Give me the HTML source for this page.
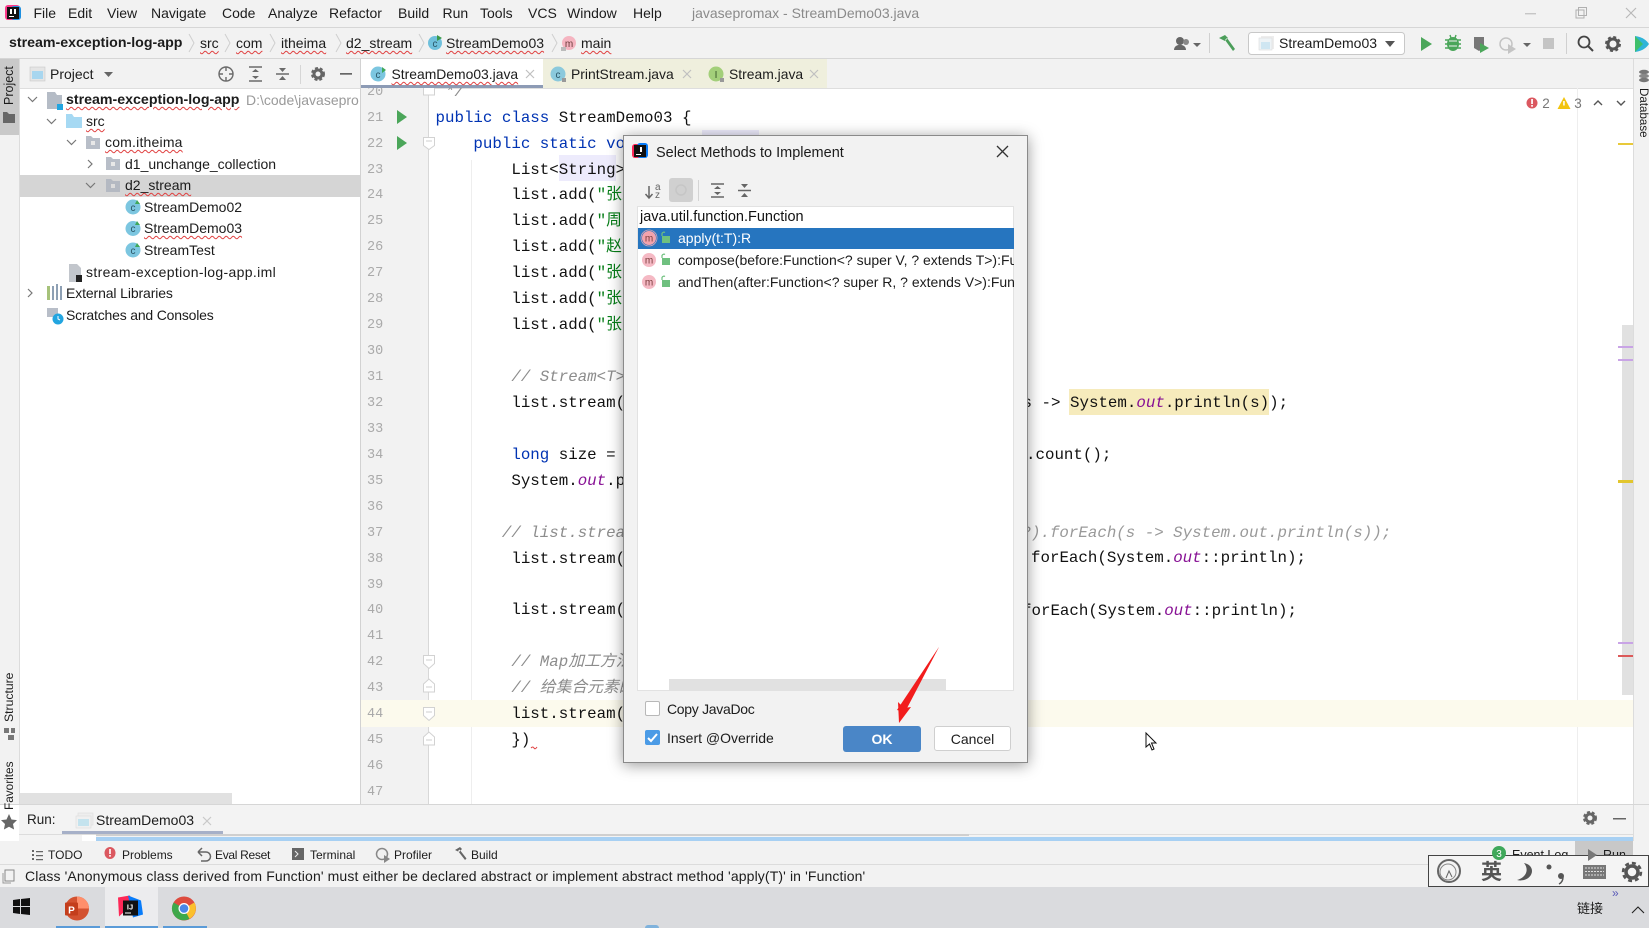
<!DOCTYPE html>
<html><head><meta charset="utf-8"><style>
html,body{margin:0;padding:0;width:1649px;height:928px;overflow:hidden;background:#fff}
#root{position:relative;width:1649px;height:928px;overflow:hidden;font-family:"Liberation Sans","Noto Sans CJK SC",sans-serif;font-size:14px;color:#1c1c1c;filter:blur(.3px)}
.b{position:absolute}
.t{position:absolute;white-space:pre;line-height:20px;height:20px}
.w{text-decoration:underline wavy #e04040 1px;text-underline-offset:2px}
svg{position:absolute;left:0;top:0}
.code{position:absolute;font-family:"Liberation Mono","DejaVu Sans Mono","Noto Sans CJK SC",monospace;font-size:15.8px;color:#111}
.code div{height:25.95px;line-height:25.95px;white-space:pre;overflow:hidden}
.k{color:#0033b3}.s{color:#067d17}.o{color:#871094;font-style:italic}.c{color:#8c8c8c;font-style:italic}
.m{position:absolute;white-space:pre;font-family:"Liberation Mono","DejaVu Sans Mono",monospace;font-size:15.8px;line-height:26px;height:26px;color:#111}
.rot{position:absolute;white-space:pre;font-size:12.5px;line-height:16px;transform-origin:0 0}
.nums{position:absolute;font-family:"Liberation Mono",monospace;font-size:13.5px;color:#aaa}
.nums div{height:25.95px;line-height:25.95px}
</style></head><body><div id="root">
<!-- chrome backgrounds -->
<div class="b" style="left:0;top:0;width:1649px;height:27px;background:#f2f2f2;border-bottom:1px solid #d6d6d6"></div>
<div class="b" style="left:0;top:28px;width:1649px;height:30px;background:#f2f2f2;border-bottom:1px solid #d6d6d6"></div>
<div class="b" style="left:0;top:59px;width:19px;height:746px;background:#f2f2f2;border-right:1px solid #dcdcdc"></div>
<div class="b" style="left:0;top:59px;width:19px;height:76px;background:#c9c9c9"></div>
<div class="b" style="left:20px;top:59px;width:341px;height:29px;background:#f2f2f2;border-bottom:1px solid #dedede"></div>
<div class="b" style="left:361px;top:59px;width:1272px;height:29px;background:#f2f2f2;border-bottom:1px solid #dedede"></div>
<div class="b" style="left:1633px;top:59px;width:16px;height:806px;background:#f2f2f2;border-left:1px solid #dcdcdc;box-sizing:border-box"></div>
<div class="b" style="left:361px;top:59px;width:182px;height:26px;background:#fff"></div>
<div class="b" style="left:361px;top:85px;width:182px;height:3px;background:#8d9bb5"></div>
<div class="b" style="left:543px;top:59px;width:284px;height:29px;background:#efefdd"></div>
<div class="b" style="left:360px;top:59px;width:1px;height:745px;background:#d2d2d2"></div>
<div class="b" style="left:20px;top:175px;width:340px;height:21.5px;background:#d5d5d5"></div>
<div class="b" style="left:361px;top:88px;width:67px;height:716px;background:#f2f2f2;border-right:1px solid #d8d8d8"></div>
<div class="b" style="left:471px;top:160px;width:1px;height:644px;background:#eeeeee"></div>
<div class="b" style="left:1577px;top:88px;width:1px;height:716px;background:#eeeeee"></div>
<div class="b" style="left:361px;top:700px;width:1272px;height:27px;background:#fcfaed"></div>
<div class="b" style="left:1622px;top:325px;width:11px;height:370px;background:#e1e1e1"></div>
<div class="b" style="left:1618px;top:143px;width:15px;height:2px;background:#e8c93a"></div>
<div class="b" style="left:1618px;top:346px;width:15px;height:2px;background:#c9a4e6"></div>
<div class="b" style="left:1618px;top:359px;width:15px;height:2px;background:#c9a4e6"></div>
<div class="b" style="left:1618px;top:480px;width:15px;height:3px;background:#e2c62e"></div>
<div class="b" style="left:1618px;top:642px;width:15px;height:2px;background:#c9a4e6"></div>
<div class="b" style="left:1618px;top:655px;width:15px;height:2px;background:#dc5a5a"></div>
<div class="b" style="left:20px;top:793px;width:212px;height:11px;background:#e1e1e1"></div>
<div class="b" style="left:0;top:804px;width:1649px;height:1px;background:#d6d6d6"></div>
<div class="b" style="left:19px;top:805px;width:1614px;height:29px;background:#f3f3f3;border-bottom:1px solid #dcdcdc"></div>
<div class="b" style="left:62px;top:831px;width:161px;height:3px;background:#a6b0c8"></div>
<div class="b" style="left:19px;top:835px;width:1614px;height:6px;background:#f3f3f3"></div>
<div class="b" style="left:82px;top:835px;width:14px;height:6px;background:#fff"></div>
<div class="b" style="left:96px;top:834px;width:873px;height:2px;background:#cfcfcf"></div>
<div class="b" style="left:96px;top:837px;width:1537px;height:4px;background:#a7d0f3"></div>
<div class="b" style="left:0;top:841px;width:1649px;height:24px;background:#f2f2f2;border-bottom:1px solid #dcdcdc;box-sizing:border-box"></div>
<div class="b" style="left:1575px;top:841px;width:58px;height:24px;background:#c8c8c8"></div>
<div class="b" style="left:0;top:865px;width:1649px;height:22px;background:#f2f2f2"></div>
<div class="b" style="left:0;top:887px;width:1649px;height:41px;background:#dadbde"></div>
<div class="b" style="left:105px;top:887px;width:53px;height:41px;background:#ececee"></div>
<div class="b" style="left:56px;top:926px;width:44px;height:2px;background:#5a9bd8"></div>
<div class="b" style="left:105px;top:926px;width:53px;height:2px;background:#5a9bd8"></div>
<div class="b" style="left:163px;top:926px;width:44px;height:2px;background:#5a9bd8"></div>
<div class="b" style="left:645px;top:925px;width:14px;height:3px;border-radius:7px 7px 0 0;background:#7fb2dc"></div>

<!-- menu -->
<div class="t" style="left:33.500px;top:2.500px">File</div><div class="t" style="left:68px;top:2.500px">Edit</div><div class="t" style="left:107px;top:2.500px">View</div><div class="t" style="left:151px;top:2.500px">Navigate</div><div class="t" style="left:222px;top:2.500px">Code</div><div class="t" style="left:268px;top:2.500px">Analyze</div><div class="t" style="left:329px;top:2.500px">Refactor</div><div class="t" style="left:398px;top:2.500px">Build</div><div class="t" style="left:442.500px;top:2.500px">Run</div><div class="t" style="left:480px;top:2.500px">Tools</div><div class="t" style="left:528px;top:2.500px">VCS</div><div class="t" style="left:567px;top:2.500px">Window</div><div class="t" style="left:633px;top:2.500px">Help</div>
<div class="t" style="left:692px;top:2.500px;color:#8a8a8a">javasepromax - StreamDemo03.java</div>

<!-- breadcrumb -->
<div class="t" style="left:9px;top:33px;font-weight:bold;font-size:14.2px">stream-exception-log-app</div>
<div class="t w" style="left:200px;top:33px">src</div><div class="t w" style="left:236px;top:33px">com</div><div class="t w" style="left:281px;top:33px">itheima</div><div class="t w" style="left:346px;top:33px">d2_stream</div><div class="t w" style="left:446px;top:33px">StreamDemo03</div><div class="t w" style="left:581px;top:33px">main</div>
<div class="t" style="left:1279px;top:33px;z-index:3">StreamDemo03</div>

<!-- project panel -->
<div class="t" style="left:50px;top:64px">Project</div>
<div class="t w" style="left:66px;top:90px;font-weight:bold;font-size:14.2px">stream-exception-log-app</div>
<div class="b" style="left:246px;top:90px;width:114px;height:20px;overflow:hidden"><div class="t" style="left:0;top:0;color:#9a9a9a">D:\code\javasepro</div></div>
<div class="t w" style="left:86px;top:111px">src</div>
<div class="t w" style="left:105px;top:132px;letter-spacing:.2px">com.itheima</div>
<div class="t" style="left:125px;top:154px">d1_unchange_collection</div>
<div class="t w" style="left:125px;top:175px">d2_stream</div>
<div class="t" style="left:144px;top:197px">StreamDemo02</div>
<div class="t w" style="left:144px;top:218px">StreamDemo03</div>
<div class="t" style="left:144px;top:240px">StreamTest</div>
<div class="t" style="left:86px;top:262px;letter-spacing:.34px">stream-exception-log-app.iml</div>
<div class="t" style="left:66px;top:283px;letter-spacing:-.12px">External Libraries</div>
<div class="t" style="left:66px;top:305px;letter-spacing:-.19px">Scratches and Consoles</div>

<!-- tabs -->
<div class="t w" style="left:391.500px;top:64px;font-size:13.9px">StreamDemo03.java</div>
<div class="t" style="left:571px;top:64px;font-size:13.9px">PrintStream.java</div>
<div class="t" style="left:729px;top:64px;font-size:13.9px">Stream.java</div>

<!-- left/right vertical labels -->
<div class="rot" style="left:1px;top:105px;transform:rotate(-90deg)">Project</div>
<div class="rot" style="left:1px;top:722px;font-size:12.2px;transform:rotate(-90deg)">Structure</div>
<div class="rot" style="left:1px;top:810px;font-size:11.8px;transform:rotate(-90deg)">Favorites</div>
<div class="rot" style="left:1651px;top:88px;font-size:11.6px;transform:rotate(90deg)">Database</div>

<!-- highlights -->
<div class="b" style="left:702px;top:130px;width:57px;height:6px;background:#edebfc"></div>
<div class="b" style="left:559px;top:155px;width:57px;height:26px;background:#edebfc"></div>
<div class="b" style="left:1069px;top:389px;width:200px;height:26px;background:#f6ebbc"></div>

<!-- line numbers -->
<div class="b" style="left:361px;top:88px;width:60px;height:716px;overflow:hidden"><div class="nums" style="left:6px;top:-8.300px">
<div>20</div><div>21</div><div>22</div><div>23</div><div>24</div><div>25</div><div>26</div><div>27</div><div>28</div><div>29</div><div>30</div><div>31</div><div>32</div><div>33</div><div>34</div><div>35</div><div>36</div><div>37</div><div>38</div><div>39</div><div>40</div><div>41</div><div>42</div><div>43</div><div>44</div><div>45</div><div>46</div><div>47</div></div></div>

<!-- code -->
<div class="b" style="left:435.500px;top:88px;width:590px;height:716px;overflow:hidden"><div class="code" style="left:0;top:-8.300px;width:590px">
<div class="c"> */</div>
<div><span class="k">public class</span> StreamDemo03 {</div>
<div>    <span class="k">public static</span> <span class="k">void</span></div>
<div>        List&lt;String&gt; list</div>
<div>        list.add(<span class="s">"张三</span></div>
<div>        list.add(<span class="s">"周</span></div>
<div>        list.add(<span class="s">"赵</span></div>
<div>        list.add(<span class="s">"张</span></div>
<div>        list.add(<span class="s">"张</span></div>
<div>        list.add(<span class="s">"张</span></div>
<div></div>
<div>        <span class="c">// Stream&lt;T&gt; filter</span></div>
<div>        list.stream()</div>
<div></div>
<div>        <span class="k">long</span> size = list</div>
<div>        System.<span class="o">out</span>.println</div>
<div></div>
<div>       <span class="c">// list.stream()</span></div>
<div>        list.stream()</div>
<div></div>
<div>        list.stream()</div>
<div></div>
<div>        <span class="c">// Map加工方法</span></div>
<div>        <span class="c">// 给集合元素的</span></div>
<div>        list.stream()</div>
<div>        })</div>
<div></div>
<div></div>
</div></div>
<div class="m" style="left:1022.500px;top:390px">s -&gt; </div>
<div class="m" style="left:1070px;top:390px">System.<span class="o">out</span>.println(s));</div>
<div class="m" style="left:1026px;top:441.500px">.count();</div>
<div class="m" style="left:1021.500px;top:519.500px;color:#999;font-style:italic">?).forEach(s -&gt; System.out.println(s));</div>
<div class="m" style="left:1031px;top:545px">forEach(System.<span class="o">out</span>::println);</div>
<div class="m" style="left:1022px;top:597.500px">forEach(System.<span class="o">out</span>::println);</div>

<!-- bottom bar text -->
<div class="t" style="left:27px;top:810px;font-size:13.5px">Run:</div>
<div class="t" style="left:96px;top:810px">StreamDemo03</div>
<div class="t" style="left:48px;top:845px;font-size:12px">TODO</div>
<div class="t" style="left:122px;top:845px;font-size:12px">Problems</div>
<div class="t" style="left:215px;top:845px;font-size:12px;letter-spacing:-.3px">Eval Reset</div>
<div class="t" style="left:310px;top:845px;font-size:12px">Terminal</div>
<div class="t" style="left:394px;top:845px;font-size:12px">Profiler</div>
<div class="t" style="left:471px;top:845px;font-size:12px">Build</div>
<div class="t" style="left:1512px;top:845px;font-size:12.5px">Event Log</div>
<div class="t" style="left:1603px;top:845px;font-size:12.5px">Run</div>
<div class="t" style="left:25px;top:865.500px;letter-spacing:.12px">Class 'Anonymous class derived from Function' must either be declared abstract or implement abstract method 'apply(T)' in 'Function'</div>
<div class="t" style="left:1577px;top:899px;font-size:13px;font-family:'Liberation Sans','Noto Sans CJK SC',sans-serif">链接</div>
<div class="t" style="left:1612px;top:883px;font-size:12px;color:#5a5ab8">»</div>

<!-- IME box -->
<div class="b" style="left:1428px;top:855px;width:221px;height:32px;background:#f4f4f4;border:1px solid #444;box-sizing:border-box"></div>
<div class="t" style="left:1481px;top:860px;font-size:21px;font-weight:bold;color:#555;line-height:22px;height:22px;font-family:'Noto Sans CJK SC',sans-serif">英</div>

<!-- base icons -->
<svg width="1649" height="928" viewBox="0 0 1649 928" style="pointer-events:none">
<!-- IJ logo -->
<rect x="5" y="5" width="15" height="15" fill="#fc3a8a" rx="3"/><rect x="11" y="6" width="10" height="14" fill="#1d8fe0" rx="3"/><rect x="7" y="7" width="12" height="12" fill="#111"/><rect x="9" y="16" width="5" height="1" fill="#fff"/><rect x="10" y="9" width="2" height="5" fill="#fff"/><rect x="14" y="9" width="2" height="5" fill="#fff"/>
<!-- breadcrumb chevrons -->
<g fill="none" stroke="#cfcfcf" stroke-width="1"><path d="M189 34l5 9-5 9M225 34l5 9-5 9M270 34l5 9-5 9M336 34l5 9-5 9M419 34l5 9-5 9M552 34l5 9-5 9"/></g>
<circle cx="435" cy="43" r="7" fill="#6fc0dc"/><text x="435" y="47" font-size="10" text-anchor="middle" fill="#2a5566" font-family="Liberation Sans">c</text><path d="M437 35l5 3-5 3z" fill="#3a9a4a"/>
<circle cx="569" cy="43" r="7" fill="#f5b4c0"/><text x="569" y="47" font-size="10" text-anchor="middle" fill="#6a3a3a" font-family="Liberation Sans">m</text><path d="M561 47h5v4h-5z" fill="#bbb"/>
<!-- right toolbar -->
<circle cx="1180" cy="41" r="4" fill="#666"/><path d="M1174 50c0-7 12-7 12 0z" fill="#666"/><circle cx="1186" cy="42" r="3" fill="#888"/><path d="M1193 43h8l-4 4z" fill="#666"/>
<rect x="1209" y="33" width="1" height="20" fill="#d0d0d0"/>
<path d="M1219 38l6-3 3 3-3 3zM1225 40l8 11 2-2-8-11z" fill="#4b9e5a"/>
<rect x="1248.5" y="32.5" width="156" height="22" rx="3" fill="#fff" stroke="#c8c8c8"/>
<rect x="1261" y="36" width="13" height="13" fill="#ededed"/><rect x="1259" y="38" width="13" height="12" fill="#eef3f6" stroke="#ddd" stroke-width=".6"/><rect x="1261" y="42" width="9" height="7" fill="#cfe6f2"/>
<path d="M1385 41h10l-5 6z" fill="#555"/>
<path d="M1421 37l11 7-11 7z" fill="#4ba65a"/>
<ellipse cx="1453" cy="44" rx="6" ry="7" fill="#4ba65a"/><path d="M1445 40h16M1445 44h16M1445 48h16M1450 35l1 3M1456 35l-1 3" stroke="#4ba65a" stroke-width="1.4"/><path d="M1449 41h8M1449 46h8" stroke="#f2f2f2" stroke-width="1"/>
<path d="M1474 37h10v11l-5 3-5-3z" fill="#777"/><path d="M1480 43l9 5-9 5z" fill="#4ba65a"/>
<circle cx="1506" cy="44" r="6" fill="none" stroke="#c4c4c4" stroke-width="1.5"/><path d="M1508 44l8 5-8 5z" fill="#c4c4c4"/>
<path d="M1523 43h8l-4 4z" fill="#666"/>
<rect x="1543" y="38" width="11" height="11" fill="#c4c4c4"/>
<rect x="1566" y="33" width="1" height="21" fill="#d0d0d0"/>
<circle cx="1584" cy="42" r="5.5" fill="none" stroke="#444" stroke-width="1.8"/><path d="M1588 46l5 5" stroke="#444" stroke-width="2"/>
<circle cx="1613" cy="44" r="5" fill="none" stroke="#555" stroke-width="3"/><circle cx="1613" cy="44" r="7" fill="none" stroke="#555" stroke-width="2" stroke-dasharray="3 2.5"/>
<path d="M1635 36c8 1 12 5 14 8-2 3-6 7-14 8z" fill="#2fb4d8"/><path d="M1635 36l8 8-8 8z" fill="#3fbf6a"/>
<!-- window controls -->
<rect x="1525" y="13" width="11" height="1.4" fill="#c6c6c6"/>
<rect x="1576" y="10" width="8" height="8" fill="none" stroke="#b0b0b0"/><rect x="1578.5" y="7.5" width="8" height="8" fill="none" stroke="#b0b0b0"/>
<path d="M1626 8l10 10M1636 8l-10 10" stroke="#b8b8b8" stroke-width="1.2"/>
<!-- project toolbar -->
<rect x="30" y="67" width="15" height="14" fill="#e5e5e5" stroke="#c8c8c8" stroke-width=".6"/><rect x="32" y="71" width="11" height="8" fill="#a8d6ef"/>
<path d="M104 72h9l-4.500 5z" fill="#666"/>
<circle cx="226" cy="74" r="7" fill="none" stroke="#6a6a6a" stroke-width="1.4"/><path d="M226 67v4M226 77v4M219 74h4M229 74h4" stroke="#6a6a6a" stroke-width="1.4"/>
<path d="M249 67h13M249 81h13" stroke="#6a6a6a" stroke-width="1.5"/><path d="M252 72l3.500-3 3.500 3zM252 76l3.500 3 3.500-3z" fill="#6a6a6a"/>
<path d="M276 74h13" stroke="#6a6a6a" stroke-width="1.5"/><path d="M279 68l3.500 4 3.500-4zM279 80l3.500-4 3.500 4z" fill="#6a6a6a"/>
<rect x="300" y="65" width="1" height="19" fill="#d6d6d6"/>
<circle cx="318" cy="74" r="4" fill="none" stroke="#666" stroke-width="3"/><circle cx="318" cy="74" r="6" fill="none" stroke="#666" stroke-width="2" stroke-dasharray="3 2"/>
<rect x="340" y="73" width="12" height="1.700" fill="#666"/>
<!-- left strip icons -->
<path d="M3 112h4l2 2h6v9H3z" fill="#666"/>
<path d="M4 728h5v5H4zM11 728h4v5h-4zM8 735h6v5H8z" fill="#777"/>
<path d="M9 814l2.500 5.500 5.500.6-4 3.900 1.100 5.500-5.100-2.800-5.100 2.800 1.100-5.500-4-3.900 5.500-.6z" fill="#666"/>
<ellipse cx="1644" cy="72" rx="5" ry="2.200" fill="#777"/><ellipse cx="1644" cy="76" rx="5" ry="2.200" fill="#888"/><ellipse cx="1644" cy="80" rx="5" ry="2.200" fill="#777"/>
<!-- tree -->
<g fill="none" stroke="#777" stroke-width="1.2">
<path d="M28 97l4.500 4.500 4.500-4.500M47 119l4.500 4.500 4.500-4.500M67 140l4.500 4.500 4.500-4.500M86 183l4.500 4.500 4.500-4.500M88 160l4 4-4 4M28 289l4 4-4 4"/></g>
<path d="M47 92h8l2 3h5v14H47z" fill="#b5bcc6"/><rect x="57" y="104" width="6" height="6" fill="#22a5e0"/>
<path d="M66 114h6l2 3h8v11H66z" fill="#a6d9f3"/>
<path d="M86 136h5l2 2h7v11H86z" fill="#b8bec8"/><rect x="91" y="141" width="4" height="4" fill="#e8e8e8"/>
<path d="M106 157h5l2 2h7v11h-14z" fill="#b8bec8"/><rect x="111" y="162" width="4" height="4" fill="#e8e8e8"/>
<path d="M106 179h5l2 2h7v11h-14z" fill="#b4b9c2"/><rect x="111" y="184" width="4" height="4" fill="#dcdcdc"/>
<g font-family="Liberation Sans" font-size="10" text-anchor="middle" fill="#2a5566">
<circle cx="133" cy="207" r="7.500" fill="#7cc6e0"/><text x="133" y="211">c</text><path d="M137 200l3 4h-5z" fill="#3fa85a"/>
<circle cx="133" cy="228.500" r="7.500" fill="#7cc6e0"/><text x="133" y="232">c</text><path d="M137 221l3 4h-5z" fill="#3fa85a"/>
<circle cx="133" cy="250" r="7.500" fill="#7cc6e0"/><text x="133" y="254">c</text><path d="M137 243l3 4h-5z" fill="#3fa85a"/>
<circle cx="378" cy="74" r="7.500" fill="#7cc6e0"/><text x="378" y="78">c</text><path d="M382 67l4 3-4 3z" fill="#3fa85a"/>
<circle cx="558" cy="74" r="7.500" fill="#8bc9dc"/><text x="558" y="78">c</text><rect x="562" y="78" width="4" height="4" fill="#999"/>
<circle cx="716" cy="74" r="7.500" fill="#a3cf7a"/><text x="716" y="78" fill="#3a5a2a">I</text><rect x="720" y="78" width="4" height="4" fill="#999"/>
</g>
<path d="M69 264h8l4 4v14H69z" fill="#c2c6cc"/><rect x="76" y="275" width="6" height="7" fill="#222"/>
<path d="M48 286h2v14h-2zM52 286h2v14h-2zM56 284h2v16h-2zM60 286h2v14h-2z" fill="#8ea0b4"/><path d="M47 286h3v14h-3z" fill="#a6c27a"/>
<path d="M47 308h11v9H47z" fill="#b8bec8"/><circle cx="58" cy="319" r="5.500" fill="#22a5e0"/><path d="M58 316v3l2 1" stroke="#fff" fill="none"/>
<!-- tab x -->
<path d="M526 70l8 8M534 70l-8 8M683 70l8 8M691 70l-8 8M810 70l8 8M818 70l-8 8" stroke="#c0c0c0" stroke-width="1.200"/>
<!-- gutter -->
<path d="M397 110l10 7-10 7zM397 136l10 7-10 7z" fill="#4ba65a"/>
<g fill="#fff" stroke="#d2d2d2">
<path d="M423.500 88v7h11v-7"/>
<path d="M423.500 137.500h11v8l-5.500 4-5.500-4z"/>
<path d="M423.500 656px" style="display:none"/>
<path d="M423.500 655.500h11v8l-5.500 5-5.500-5z"/>
<path d="M423.500 684l5.500-5 5.500 5v8h-11z"/>
<path d="M423.500 707.500h11v8l-5.500 5-5.500-5z"/>
<path d="M423.500 737l5.500-5 5.500 5v8h-11z"/>
</g>
<path d="M426 141h6M426 660h6M426 687h6M426 712h6M426 740h6" stroke="#cfcfcf"/>
<path d="M531 748q2-2 3 0t3-1" fill="none" stroke="#e04040"/>
<!-- errors -->
<circle cx="1532" cy="103" r="5.500" fill="#db5860"/><rect x="1531.200" y="99" width="1.700" height="5" fill="#fff"/><rect x="1531.200" y="105" width="1.700" height="1.700" fill="#fff"/>
<path d="M1564 97l6.500 12h-13z" fill="#f2c40f"/><rect x="1563.200" y="101" width="1.500" height="4.500" fill="#fff"/>
<text x="1546" y="108" font-size="13.500" text-anchor="middle" fill="#777" font-family="Liberation Sans">2</text><text x="1578" y="108" font-size="13.500" text-anchor="middle" fill="#777" font-family="Liberation Sans">3</text>
<path d="M1594 105l4-4 4 4M1617 101l4 4 4-4" fill="none" stroke="#555" stroke-width="1.400"/>
<!-- run tab -->
<rect x="78" y="813" width="15" height="12" fill="#eeeeee" stroke="#ddd" stroke-width=".6"/><rect x="76" y="816" width="15" height="12" fill="#f0f0f0" stroke="#ddd" stroke-width=".6"/><rect x="78" y="819" width="11" height="7" fill="#c4e3ee"/>
<path d="M203 817l8 8M211 817l-8 8" stroke="#c8c8c8" stroke-width="1.200"/>
<circle cx="1590" cy="818" r="4" fill="none" stroke="#666" stroke-width="3"/><circle cx="1590" cy="818" r="6" fill="none" stroke="#666" stroke-width="2" stroke-dasharray="3 2"/>
<rect x="1613" y="818" width="13" height="1.500" fill="#666"/>
<!-- tool strip -->
<path d="M32 850h2v2h-2zM32 854h2v2h-2zM32 858h2v2h-2zM36 851h7v1.200h-7zM36 855h7v1.200h-7zM36 859h7v1.200h-7z" fill="#666"/>
<ellipse cx="110" cy="853" rx="5.500" ry="6" fill="#db5860"/><rect x="109.200" y="849" width="1.600" height="5" fill="#fff"/><rect x="109.200" y="855" width="1.600" height="1.700" fill="#fff"/>
<path d="M198 852h8a4 4 0 010 9h-5M198 852l4-4M198 852l4 4" fill="none" stroke="#666" stroke-width="1.500"/>
<rect x="292" y="848" width="12" height="12" fill="#666"/><path d="M295 851l3 3-3 3" stroke="#eee" fill="none"/>
<circle cx="382" cy="854" r="5.500" fill="none" stroke="#888" stroke-width="1.500"/><path d="M384 855l6 4-6 4z" fill="#888"/>
<path d="M455 850l5-3 2 2-3 3zM458 851l7 9 1.500-1.500-7-9z" fill="#666"/>
<circle cx="1499" cy="853" r="7" fill="#3fa85a"/><text x="1499" y="857" font-size="10" fill="#fff" text-anchor="middle" font-family="Liberation Sans">3</text>
<path d="M1588 849l9 6-9 6z" fill="#777"/>
<rect x="5" y="870" width="9" height="11" fill="#f2f2f2" stroke="#888"/><path d="M3 873v10h8" fill="none" stroke="#999"/>
<!-- taskbar -->
<path d="M13 900l7-1v7h-7zM21 899l9-1v8h-9zM13 907h7v7l-7-1zM21 907h9v8l-9-1z" fill="#111"/>
<g transform="translate(0,1.500)">
<circle cx="77" cy="907" r="12" fill="#d35230"/><path d="M77 895a12 12 0 0112 12h-12z" fill="#ff8f6b"/><rect x="65" y="901" width="13" height="13" rx="1" fill="#c43e1c"/><text x="71.500" y="912" font-size="10" font-weight="bold" fill="#fff" text-anchor="middle" font-family="Liberation Sans">P</text>
<path d="M118 896l12-2 2 9-13 12z" fill="#fe2857"/><path d="M128 894l13 5 2 14-10 3z" fill="#087cfa"/><rect x="123" y="899" width="15" height="15" fill="#111"/><text x="130" y="908" font-size="7.500" font-weight="bold" fill="#fff" text-anchor="middle" font-family="Liberation Sans">IJ</text><rect x="125" y="911" width="6" height="1" fill="#fff"/>
<circle cx="184" cy="907" r="12" fill="#dd4b3e"/><path d="M184 907l10.400-6a12 12 0 01-5 16.400l-5.400-10.400z" fill="#fbc02d"/><path d="M184 907l5.400 10.400a12 12 0 01-15.800-4.400l10.400-6z" fill="#3da94b"/><path d="M173.600 913a12 12 0 010-12l10.400 6z" fill="#3da94b"/><circle cx="184" cy="907" r="5.500" fill="#fff"/><circle cx="184" cy="907" r="4.300" fill="#4a86e8"/>
</g>
<path d="M1632 913l6-6 6 6" fill="none" stroke="#222" stroke-width="1.100"/>
<!-- IME icons -->
<circle cx="1449" cy="871" r="11" fill="none" stroke="#666" stroke-width="2"/><circle cx="1448" cy="872" r="8" fill="#f4f4f4" stroke="#888"/><path d="M1446 878l3-7 3 6" fill="none" stroke="#666"/>
<path d="M1524 863c5 6 3 14-7 17 8 2 15-3 15-9 0-4-3-7-8-8z" fill="#555"/>
<circle cx="1549" cy="867" r="2.500" fill="#555"/><circle cx="1561" cy="876" r="3" fill="#555"/><path d="M1563 877q0 5-4 7" stroke="#555" fill="none" stroke-width="1.500"/>
<rect x="1583" y="865" width="23" height="14" fill="#777"/><path d="M1585 868h19M1585 871.500h19M1585 875h19" stroke="#ddd" stroke-dasharray="2 1"/>
<circle cx="1632" cy="872" r="6" fill="none" stroke="#555" stroke-width="3.500"/><circle cx="1632" cy="872" r="9" fill="none" stroke="#555" stroke-width="2.500" stroke-dasharray="4 3"/>
<!-- cursor -->
<path d="M1146 733v14l3.500-3 2.500 6 2-1-2.500-6h4.500z" fill="#fff" stroke="#111" stroke-width="1"/>
</svg>

<!-- dialog -->
<div class="b" style="left:623px;top:135px;width:405px;height:628px;background:#f2f2f2;border:1px solid #8a8a8a;box-sizing:border-box;box-shadow:0 2px 14px rgba(0,0,0,.4)"></div>
<div class="b" style="left:637px;top:206px;width:377px;height:485px;background:#fff;border:1px solid #e2e2e2;box-sizing:border-box"></div>
<div class="b" style="left:638px;top:228px;width:376px;height:21px;background:#2675bf"></div>
<div class="b" style="left:669px;top:679px;width:277px;height:12px;background:#e1e1e1"></div>
<div class="b" style="left:669px;top:178px;width:24px;height:24px;background:#d0d0d0;border-radius:3px"></div>
<div class="b" style="left:698px;top:180px;width:1px;height:21px;background:#d4d4d4"></div>
<div class="t" style="left:656px;top:142.500px;font-size:14.5px">Select Methods to Implement</div>
<div class="t" style="left:640px;top:207px;font-size:14.5px;color:#111">java.util.function.Function</div>
<div class="b" style="left:678px;top:228px;width:336px;height:66px;overflow:hidden">
<div class="t" style="left:0;top:0;color:#fff">apply(t:T):R</div>
<div class="t" style="left:0;top:22px">compose(before:Function&lt;? super V, ? extends T&gt;):Function&lt;V, R&gt;</div>
<div class="t" style="left:0;top:43.500px">andThen(after:Function&lt;? super R, ? extends V&gt;):Function&lt;T, V&gt;</div>
</div>
<div class="b" style="left:645px;top:701px;width:15px;height:15px;background:#fff;border:1px solid #b8b8b8;box-sizing:border-box;border-radius:2px"></div>
<div class="t" style="left:667px;top:699px;letter-spacing:-.3px">Copy JavaDoc</div>
<div class="b" style="left:645px;top:730px;width:15px;height:15px;background:#4b9be6;border-radius:2px"></div>
<div class="t" style="left:667px;top:728px;">Insert @Override</div>
<div class="b" style="left:843px;top:726px;width:78px;height:26px;background:#4a86c7;border-radius:3px;color:#fff;font-weight:bold;text-align:center;line-height:27px;font-size:14px">OK</div>
<div class="b" style="left:934px;top:726px;width:77px;height:25px;background:#fff;border:1px solid #cfcfcf;box-sizing:border-box;border-radius:3px;text-align:center;line-height:24px">Cancel</div>

<svg width="1649" height="928" viewBox="0 0 1649 928" style="pointer-events:none">
<rect x="632" y="144" width="14" height="14" rx="3" fill="#fe2857"/><rect x="637" y="143" width="11" height="15" rx="3" fill="#087cfa"/><rect x="634" y="145" width="12" height="12" fill="#111"/><rect x="636" y="154" width="5" height="1" fill="#fff"/><rect x="640" y="147" width="2" height="5" fill="#fff"/>
<path d="M997 146l11 11M1008 146l-11 11" stroke="#333" stroke-width="1.300"/>
<path d="M649 186v12M645.500 194l3.500 4 3.500-4" stroke="#666" stroke-width="1.500" fill="none"/>
<text x="655" y="190" font-size="10" fill="#666" font-family="Liberation Sans">a</text><text x="655" y="198" font-size="10" fill="#666" font-family="Liberation Sans">z</text>
<circle cx="681" cy="190" r="5" fill="none" stroke="#c6c6c6" stroke-width="1.500"/>
<path d="M711 184h13M711 197h13" stroke="#666" stroke-width="1.500"/><path d="M714 189l3.500-3 3.500 3zM714 192l3.500 3 3.500-3z" fill="#666"/>
<path d="M738 190.500h13" stroke="#666" stroke-width="1.500"/><path d="M741 184l3.500 4 3.500-4zM741 197l3.500-4 3.500 4z" fill="#666"/>
<circle cx="649" cy="238" r="7" fill="#f2a3ad"/><circle cx="649" cy="238" r="8" fill="none" stroke="#d9a6b8" stroke-width=".8"/>
<circle cx="649" cy="260" r="7" fill="#f5b9c4"/><circle cx="649" cy="282" r="7" fill="#f5b9c4"/>
<g font-family="Liberation Sans" font-size="10" text-anchor="middle" fill="#7a3c3c"><text x="649" y="241.500">m</text><text x="649" y="263.500">m</text><text x="649" y="285.500">m</text></g>
<g fill="#6fc07f"><path d="M662 236h8v7h-8z"/><path d="M662 258h8v7h-8z"/><path d="M662 280h8v7h-8z"/></g>
<g fill="none" stroke="#6fc07f" stroke-width="1.200"><path d="M662 236v-2.500a2 2 0 013-1M662 258v-2.500a2 2 0 013-1M662 280v-2.500a2 2 0 013-1"/></g>
<path d="M648 738l3 3 6-7" fill="none" stroke="#fff" stroke-width="2"/>
<path d="M939 647L905 712l-8-2z" fill="#f21c1c"/><path d="M899 723l-1-21 6 6 7-1z" fill="#f21c1c"/><path d="M939 647L903 710l-4-2z" fill="#f21c1c"/>
</svg>
</div></body></html>
